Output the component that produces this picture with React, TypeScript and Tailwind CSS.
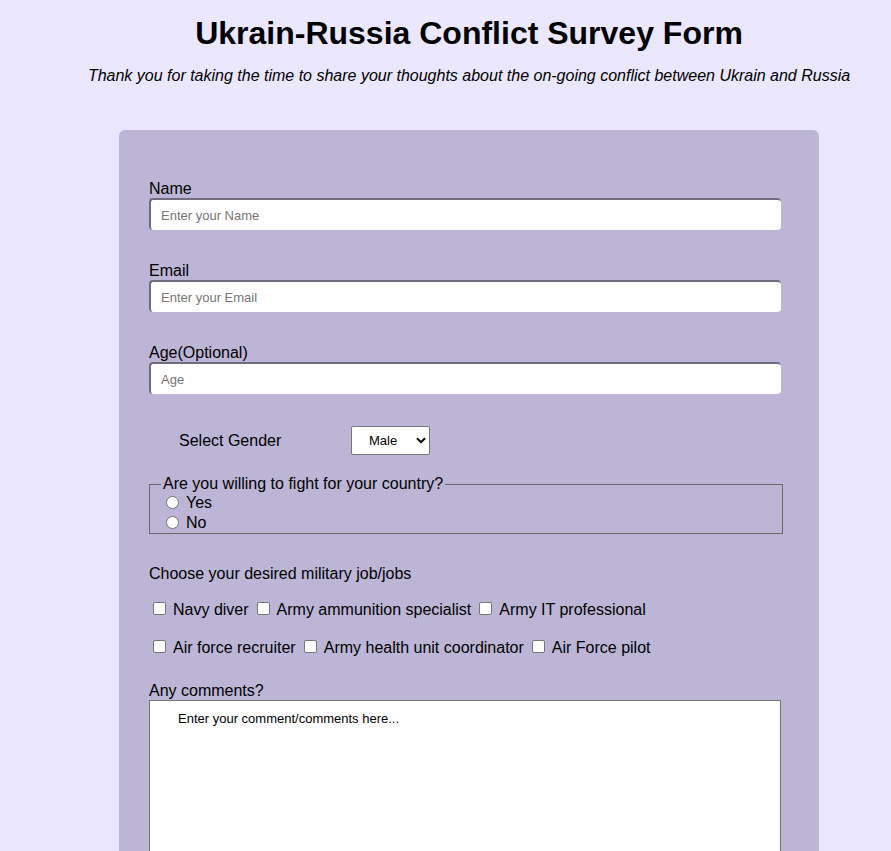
import React from "react";

const fields = [
  { id: "name", label: "Name", type: "text", placeholder: "Enter your Name" },
  { id: "email", label: "Email", type: "email", placeholder: "Enter your Email" },
  { id: "age", label: "Age(Optional)", type: "number", placeholder: "Age" },
];

const jobRows = [
  ["Navy diver", "Army ammunition specialist", "Army IT professional"],
  ["Air force recruiter", "Army health unit coordinator", "Air Force pilot"],
];

function TextField({ id, label, type, placeholder }: (typeof fields)[number]) {
  return (
    <div className="mb-8">
      <label htmlFor={id} className="block leading-[18px]">
        {label}
      </label>
      <input
        id={id}
        name={id}
        type={type}
        placeholder={placeholder}
        className="block h-8 w-full rounded border-t-2 border-l-2 border-[#726c80] bg-white px-2.5 text-[13px] placeholder:text-[#757575]"
      />
    </div>
  );
}

function Radio({ value }: { value: string }) {
  return (
    <label className="flex h-5 items-center gap-[7px]">
      <input
        type="radio"
        name="fight"
        value={value}
        className="mb-0.5 size-[13px] appearance-none rounded-full border border-[#767676] bg-white checked:border-4 checked:border-[#0075ff]"
      />
      {value}
    </label>
  );
}

function Checkbox({ value }: { value: string }) {
  return (
    <label className="flex items-center gap-[7px]">
      <input
        type="checkbox"
        name="jobs"
        value={value}
        className="mb-1 size-[13px] appearance-none rounded-xs border border-[#767676] bg-white checked:bg-[#0075ff]"
      />
      {value}
    </label>
  );
}

export default function App() {
  return (
    <div className="h-screen overflow-y-auto bg-[#ebe7fe] pl-[47px] font-['Liberation_Sans',Arial,sans-serif] text-base text-black [scrollbar-width:none]">
      <header className="text-center">
        <h1 className="pt-3 text-[32px] leading-[42px] font-bold">
          Ukrain-Russia Conflict Survey Form
        </h1>
        <p className="mt-3 leading-5 italic">
          Thank you for taking the time to share your thoughts about the on-going conflict between
          Ukrain and Russia
        </p>
      </header>

      <form className="mx-auto mt-11 max-w-[700px] rounded-md bg-[#bcb5d6] pt-[50px] pr-[38px] pb-8 pl-[30px]">
        {fields.map((field) => (
          <TextField key={field.id} {...field} />
        ))}

        <div className="flex items-center pl-[30px]">
          <label htmlFor="gender" className="w-[172px] leading-[18px]">
            Select Gender
          </label>
          <span className="relative">
            <select
              id="gender"
              name="gender"
              className="block h-[29px] w-[79px] appearance-none rounded-xs border border-[#767676] bg-white pl-[17px] text-[13px]"
            >
              <option>Male</option>
              <option>Female</option>
            </select>
            <svg
              viewBox="0 0 10 7"
              className="pointer-events-none absolute top-[11px] right-[4px] h-[7px] w-[10px]"
              fill="none"
              stroke="black"
              strokeWidth="2"
              aria-hidden="true"
            >
              <path d="M1 1.2 5 5.2 9 1.2" />
            </svg>
          </span>
        </div>

        <fieldset className="mt-5 -mr-0.5 border border-[#6b6868] pl-4">
          <legend className="-ml-[5px] px-0.5 leading-[18px]">
            Are you willing to fight for your country?
          </legend>
          <Radio value="Yes" />
          <Radio value="No" />
        </fieldset>

        <p className="mt-[31px] leading-[18px]">Choose your desired military job/jobs</p>
        <div className="mt-[18px] space-y-5 pl-1 leading-[18px]">
          {jobRows.map((row) => (
            <div key={row[0]} className="flex flex-wrap gap-x-2">
              {row.map((job) => (
                <Checkbox key={job} value={job} />
              ))}
            </div>
          ))}
        </div>

        <label htmlFor="comments" className="mt-[25px] block leading-[18px]">
          Any comments?
        </label>
        <textarea
          id="comments"
          name="comments"
          defaultValue="Enter your comment/comments here..."
          className="block h-[200px] w-full resize-none border border-[#767676] bg-white px-7 py-2.5 text-[13px] leading-[15px]"
        />
      </form>
    </div>
  );
}
